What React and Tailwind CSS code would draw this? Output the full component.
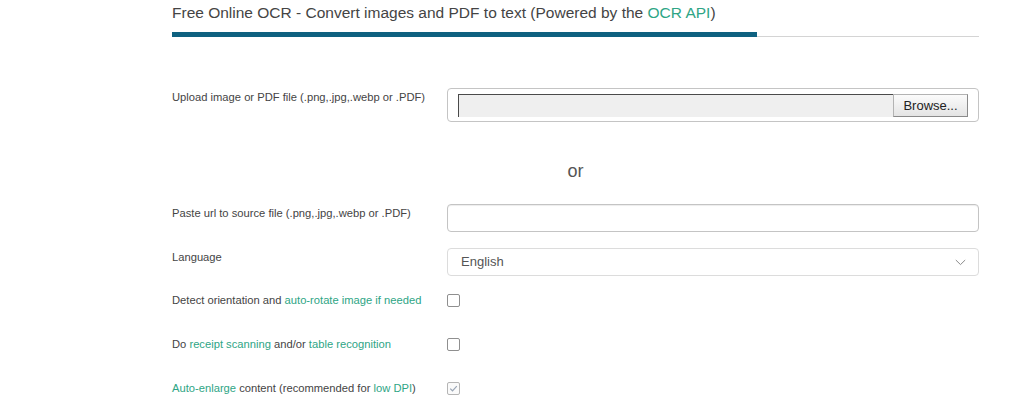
import React from 'react';

const link = 'text-[#2ea585]';

const CheckRow = ({ children, checked }) => (
  <div className="flex h-[15px] items-center">
    <div className="w-[275px] text-[11.2px] leading-[15px] text-[#444]">{children}</div>
    {checked ? (
      <span className="flex h-[13px] w-[13px] items-center justify-center rounded-[2px] border border-[#b5b5b5] bg-[#fafafa]">
        <svg width="9" height="9" viewBox="0 0 9 9" fill="none">
          <path d="M1.2 4.6 L3.5 6.8 L7.8 2.2" stroke="#9aa6b6" strokeWidth="1.2" />
        </svg>
      </span>
    ) : (
      <span className="h-[13px] w-[13px] rounded-[2px] border border-[#8f8f8f] bg-white" />
    )}
  </div>
);

const App = () => {
  return (
    <div className="min-h-[410px] bg-white font-['Liberation_Sans',Arial,sans-serif]">
      <div className="ml-[172px] w-[807px]">
        {/* Header */}
        <div className="pt-[3px] text-[15.5px] leading-[20px] text-[#444]">
          Free Online OCR - Convert images and PDF to text (Powered by the <span className={link}>OCR API</span>)
        </div>
        <div className="mt-[9px] flex items-end">
          <div className="h-[5px] w-[585px] bg-[#0e6180]" />
          <div className="flex-1 border-b border-[#d4d4d4]" />
        </div>

        {/* Upload */}
        <div className="mt-[51px] flex">
          <div className="w-[275px] pt-[2px] text-[11.2px] leading-[15px] text-[#444]">
            Upload image or PDF file (.png,.jpg,.webp or .PDF)
          </div>
          <div className="flex h-[34px] flex-1 items-start rounded-[4px] border border-[#c4c4c4] px-[10px] pt-[5px]">
            <div className="h-[23px] flex-1 border-l border-t border-[#4a4a4a] border-b-[#e0e0e0] border-r-0 bg-[#efefef]" />
            <button className="h-[23px] w-[75px] border border-[#b3b3b3] border-b-[#8a8a8a] border-r-[#8a8a8a] bg-gradient-to-b from-[#fbfbfb] to-[#e4e4e4] text-[13px] leading-[20px] text-[#222]">
              Browse...
            </button>
          </div>
        </div>

        {/* or */}
        <div className="mt-[39px] text-center text-[18px] leading-[20px] text-[#555]">or</div>

        {/* URL */}
        <div className="mt-[23px] flex">
          <div className="w-[275px] pt-[2px] text-[11.2px] leading-[15px] text-[#444]">
            Paste url to source file (.png,.jpg,.webp or .PDF)
          </div>
          <div className="h-[28px] flex-1 rounded-[4px] border border-[#c4c4c4] shadow-[inset_0_1px_1px_rgba(0,0,0,0.075)]" />
        </div>

        {/* Language */}
        <div className="mt-[16px] flex">
          <div className="w-[275px] pt-[2px] text-[11.2px] leading-[15px] text-[#444]">Language</div>
          <div className="flex h-[28px] flex-1 items-center justify-between rounded-[4px] border border-[#dcdcdc] pl-[13px] pr-[12px]">
            <span className="text-[13px] text-[#555]">English</span>
            <svg width="11" height="7" viewBox="0 0 11 7" fill="none">
              <path d="M0.8 1 L5.5 5.6 L10.2 1" stroke="#8a8a8a" strokeWidth="1" />
            </svg>
          </div>
        </div>

        {/* Options */}
        <div className="mt-[17px] flex flex-col gap-[29px]">
          <CheckRow>
            Detect orientation and <span className={link}>auto-rotate image if needed</span>
          </CheckRow>
          <CheckRow>
            Do <span className={link}>receipt scanning</span> and/or <span className={link}>table recognition</span>
          </CheckRow>
          <CheckRow checked>
            <span className={link}>Auto-enlarge</span> content (recommended for <span className={link}>low DPI</span>)
          </CheckRow>
        </div>
      </div>
    </div>
  );
};

export default App;
